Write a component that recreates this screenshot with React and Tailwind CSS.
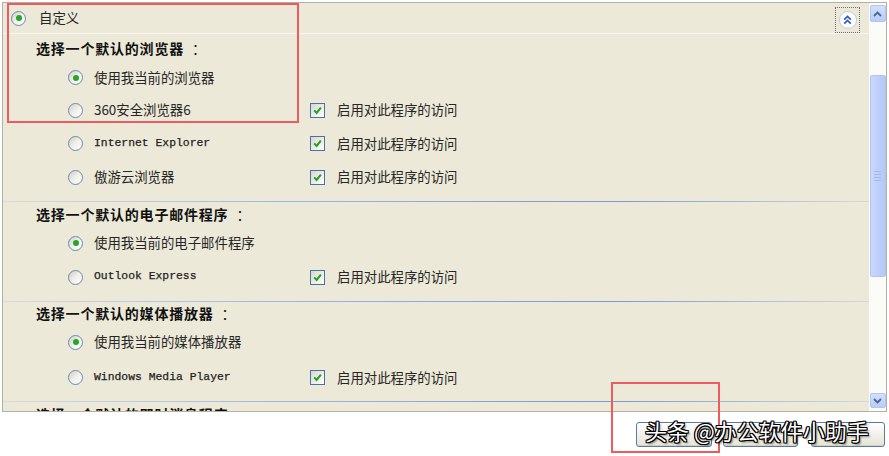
import React from "react";

const CJK = { fontFamily: '"Noto Sans CJK SC", "Noto Sans", sans-serif' };

function Radio({ checked }) {
  return (
    <span className="flex h-[15px] w-[15px] shrink-0 items-center justify-center rounded-full border border-[#6a8ab2] bg-linear-to-br from-[#d0cdc2] via-[#f1f0ea] to-white">
      {checked && <span className="h-[6px] w-[6px] rounded-full bg-[#27a527]" />}
    </span>
  );
}

function Check() {
  return (
    <span className="flex h-[15px] w-[15px] shrink-0 items-center justify-center border border-[#4a73a3] bg-linear-to-br from-[#d9d6cb] to-white">
      <svg width="9" height="9" viewBox="0 0 9 9">
        <path d="M1.2 4.4 L3.6 6.9 L7.9 1.6" stroke="#22a322" strokeWidth="2" fill="none" />
      </svg>
    </span>
  );
}

function Opt({ h, checked, label, mono, access }) {
  return (
    <div className={`flex items-center pl-[65px] ${h}`}>
      <div className="flex w-[242px] items-center">
        <Radio checked={checked} />
        {mono ? (
          <span
            className="ml-[11px] text-[11.4px] leading-none text-[#1e1e1e] [-webkit-text-stroke:0.25px_#1e1e1e]"
            style={{ fontFamily: '"Liberation Mono", monospace' }}
          >
            {label}
          </span>
        ) : (
          <span className="ml-[11px] text-[13.4px] leading-none text-[#262626]" style={CJK}>
            {label}
          </span>
        )}
      </div>
      {access && (
        <div className="flex items-center">
          <Check />
          <span className="ml-[12px] text-[13.4px] leading-none text-[#262626]" style={CJK}>
            启用对此程序的访问
          </span>
        </div>
      )}
    </div>
  );
}

function Header({ h, text }) {
  return (
    <div className={`flex items-center pl-[33px] ${h}`}>
      <span className="text-[14px] font-bold leading-none tracking-[0.8px] text-[#111]" style={CJK}>
        {text}
        <span className="ml-[8px] font-normal">：</span>
      </span>
    </div>
  );
}

function Divider() {
  return (
    <div className="h-[1px] w-full shrink-0 bg-[linear-gradient(to_right,rgba(150,178,226,0.25),#9fb8e6_30%,#7598d8_70%,rgba(150,178,226,0.3))]" />
  );
}

function ArrowBtn({ up, h }) {
  return (
    <div className={`flex w-[16px] items-center justify-center rounded-[2px] border border-[#b3c6f2] bg-linear-to-b from-[#d3e0fd] to-[#b9ccf8] ${h}`}>
      <svg width="9" height="6" viewBox="0 0 9 6">
        <path
          d={up ? "M1 5 L4.5 1.5 L8 5" : "M1 1 L4.5 4.5 L8 1"}
          stroke="#4d6594"
          strokeWidth="1.8"
          fill="none"
        />
      </svg>
    </div>
  );
}

export default function App() {
  return (
    <div className="relative h-[456px] w-[889px] overflow-hidden bg-white">
      {/* Panel */}
      <div className="ml-[2px] mt-[2px] flex h-[410px] w-[885px] overflow-hidden border border-[#b3b1a4] bg-[#ece9d8]">
        {/* content */}
        <div className="flex min-w-0 flex-1 flex-col">
          <div className="flex h-[30px] shrink-0 items-center justify-between pl-[8px] pr-[9px]">
            <div className="flex items-center">
              <Radio checked />
              <span className="ml-[13px] text-[13.4px] leading-none text-[#262626]" style={CJK}>
                自定义
              </span>
            </div>
            <div className="mt-[4px] flex h-[26px] w-[25px] items-center justify-center border border-dotted border-[#6b6b6b]">
              <span className="flex h-[18px] w-[18px] items-center justify-center rounded-full border border-[#c4cad6] bg-white">
                <svg width="9" height="10" viewBox="0 0 9 10">
                  <path d="M1.2 4.6 L4.5 1.4 L7.8 4.6 M1.2 8.6 L4.5 5.4 L7.8 8.6" stroke="#2f5ac8" strokeWidth="1.7" fill="none" />
                </svg>
              </span>
            </div>
          </div>
          <div className="h-[1px] w-full shrink-0 bg-[#f8f6ee]" />
          <Header h="h-[28px] shrink-0" text="选择一个默认的浏览器" />
          <Opt h="h-[31px] shrink-0" checked label="使用我当前的浏览器" />
          <Opt h="h-[34px] shrink-0" label="360安全浏览器6" access />
          <Opt h="h-[33px] shrink-0" label="Internet Explorer" mono access />
          <Opt h="h-[34px] shrink-0" label="傲游云浏览器" access />
          <div className="h-[7px] shrink-0" />
          <Divider />
          <Header h="h-[24px] shrink-0" text="选择一个默认的电子邮件程序" />
          <Opt h="h-[34px] shrink-0" checked label="使用我当前的电子邮件程序" />
          <Opt h="h-[34px] shrink-0" label="Outlook Express" mono access />
          <div className="h-[7px] shrink-0" />
          <Divider />
          <Header h="h-[22px] shrink-0" text="选择一个默认的媒体播放器" />
          <Opt h="h-[36px] shrink-0" checked label="使用我当前的媒体播放器" />
          <Opt h="h-[35px] shrink-0" label="Windows Media Player" mono access />
          <div className="h-[6px] shrink-0" />
          <Divider />
          <Header h="h-[24px] shrink-0" text="选择一个默认的即时消息程序" />
        </div>
        {/* scrollbar */}
        <div className="flex w-[17px] shrink-0 flex-col items-center bg-[#fbfbf7] pt-[2px]">
          <ArrowBtn up h="h-[17px] shrink-0" />
          <div className="h-[53px] shrink-0" />
          <div className="flex h-[202px] w-[16px] shrink-0 flex-col items-center justify-center gap-[2px] rounded-[2px] border border-[#b1c5f3] bg-linear-to-r from-[#c9d8fd] via-[#bdcffb] to-[#b4c8f6]">
            <span className="h-[1px] w-[7px] bg-[#a5b9e8]" />
            <span className="h-[1px] w-[7px] bg-[#a5b9e8]" />
            <span className="h-[1px] w-[7px] bg-[#a5b9e8]" />
            <span className="h-[1px] w-[7px] bg-[#a5b9e8]" />
          </div>
          <div className="h-[116px] shrink-0" />
          <ArrowBtn h="h-[15px] shrink-0" />
        </div>
      </div>

      {/* buttons */}
      <div className="mt-[10px] flex justify-end pr-[4px]">
        <div className="h-[25px] w-[76px] rounded-[3px] border border-[#5b7aa3] bg-linear-to-b from-white to-[#e6e3d6] shadow-[inset_0_-1px_0_#d6d0c0]" />
        <div className="ml-[11px] h-[25px] w-[75px] rounded-[3px] border border-[#5b7aa3] bg-linear-to-b from-white to-[#e6e3d6] shadow-[inset_0_-1px_0_#d6d0c0]" />
        <div className="ml-[13px] h-[25px] w-[74px] rounded-[3px] border border-[#5b7aa3] bg-linear-to-b from-white to-[#e6e3d6] shadow-[inset_0_-1px_0_#d6d0c0]" />
      </div>

      {/* annotation rectangles */}
      <div className="absolute left-[7px] top-[3px] h-[120px] w-[292px] border-2 border-[#ef5a5f]" />
      <div className="absolute left-[611px] top-[382px] h-[71px] w-[109px] border-2 border-[#ef5a5f]" />

      {/* watermark */}
      <div
        className="absolute left-[645px] top-[419px] whitespace-nowrap text-[22px] leading-[22px] text-white [text-shadow:1px_1px_0_#000,-1px_-1px_0_#000,1px_-1px_0_#000,-1px_1px_0_#000,0_1px_0_#000,0_-1px_0_#000,1px_0_0_#000,-1px_0_0_#000,2px_2px_2px_rgba(0,0,0,0.5)]"
        style={CJK}
      >
        头条 @办公软件小助手
      </div>
    </div>
  );
}
